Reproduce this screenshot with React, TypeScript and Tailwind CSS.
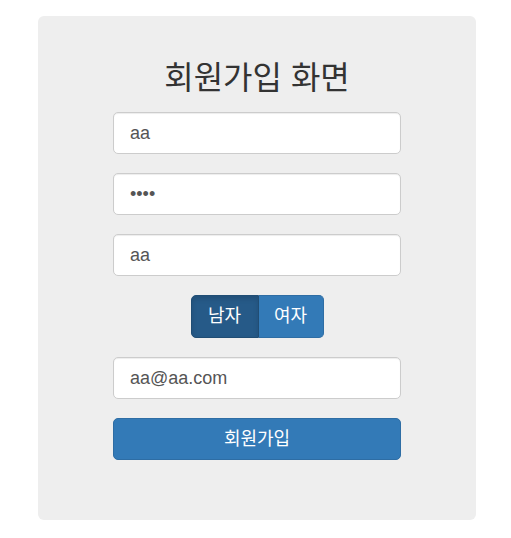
import React from "react";

const font = { fontFamily: '"Liberation Sans", "Noto Sans CJK KR", sans-serif' };

const inputCls =
  "w-[288px] h-[42px] px-4 text-[18px] text-[#555] bg-white border border-[#ccc] rounded-[5px] shadow-[inset_0_1px_1px_rgba(0,0,0,0.075)] outline-none";

export default function App() {
  return (
    <div className="w-[511px] h-[538px] bg-white" style={font}>
      <div className="ml-[38px] mt-[16px] w-[438px] h-[504px] bg-[#eeeeee] rounded-[6px] flex flex-col items-center pt-[43px]">
        <h1 className="text-[32px] leading-[38px] text-[#333] mb-[15px]">회원가입 화면</h1>
        <div className="flex flex-col items-center gap-[19px]">
          <input className={inputCls} defaultValue="aa" readOnly />
          <input className={inputCls} type="password" defaultValue="aaaa" readOnly />
          <input className={inputCls} defaultValue="aa" readOnly />
          <div className="flex h-[43px]">
            <button className="w-[68px] h-full text-[18px] text-white bg-[#265a88] border border-[#204d74] rounded-l-[5px] shadow-[inset_0_3px_5px_rgba(0,0,0,0.125)]">
              남자
            </button>
            <button className="w-[65px] h-full text-[18px] text-white bg-[#337ab7] border border-[#2e6da4] border-l-0 rounded-r-[5px]">
              여자
            </button>
          </div>
          <input className={inputCls} defaultValue="aa@aa.com" readOnly />
          <button className="w-[288px] h-[42px] text-[18px] text-white bg-[#337ab7] border border-[#2e6da4] rounded-[5px]">
            회원가입
          </button>
        </div>
      </div>
    </div>
  );
}
